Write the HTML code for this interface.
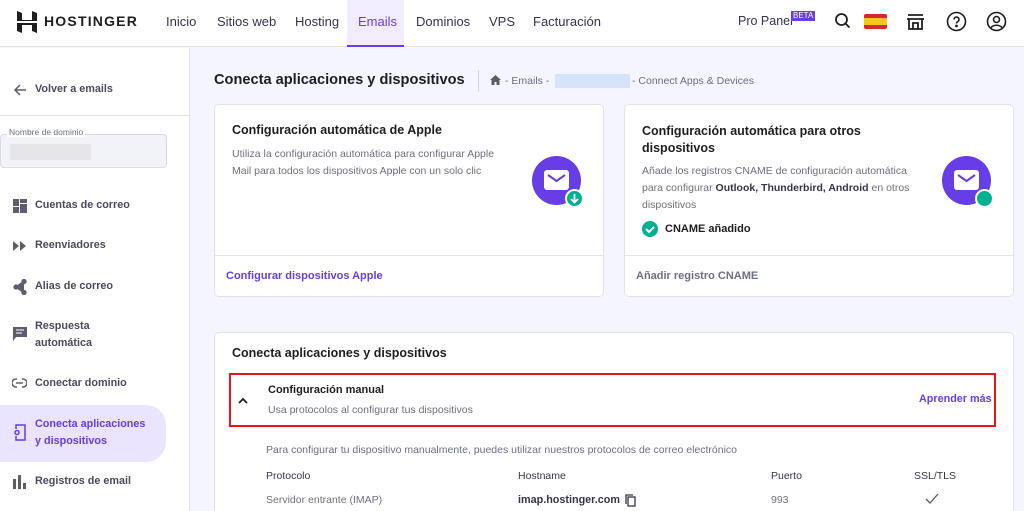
<!DOCTYPE html><html><head><meta charset="utf-8"><style>
*{box-sizing:border-box;margin:0;padding:0}
html,body{overflow:hidden}
body{width:1024px;height:511px;font-family:"Liberation Sans",sans-serif;background:#f4f5ff;position:relative;color:#1d1e20}
.a{position:absolute}
.hdr{left:0;top:0;width:1024px;height:47px;background:#fff;border-bottom:1px solid #e3e4e8}
.nav{top:14px;font-size:13px;color:#36344d}
.side{left:0;top:48px;width:190px;height:463px;background:#fff;border-right:1px solid #e3e4e8}
.si{font-size:10.8px;font-weight:bold;color:#4b4a5c;line-height:17px}
.card{background:#fff;border:1px solid #e3e4e8;border-radius:5px}
.g{color:#6d7081;font-size:10.5px;line-height:17px}
.ic{fill:#5e5d6e}
</style></head><body>
<div class="a hdr"></div>
<svg class="a" style="left:17px;top:11px" width="20" height="22" viewBox="0 0 20 22"><path d="M0 0l5 2v7l10 0V0l5 2v8H0z M0 12h20v10l-5-2v-6H5v8l-5-2z" fill="#1d1e20"/></svg>
<div class="a" style="left:44px;top:13px;font-size:14px;font-weight:bold;letter-spacing:1.2px">HOSTINGER</div>
<div class="a nav" style="left:166px">Inicio</div>
<div class="a nav" style="left:217px">Sitios web</div>
<div class="a nav" style="left:295px">Hosting</div>
<div class="a" style="left:347px;top:0;width:57px;height:47px;background:#f1ecff;border-bottom:2px solid #673de6"></div>
<div class="a nav" style="left:358px;color:#673de6">Emails</div>
<div class="a nav" style="left:416px">Dominios</div>
<div class="a nav" style="left:489px">VPS</div>
<div class="a nav" style="left:533px">Facturación</div>
<div class="a nav" style="left:738px;font-size:12.5px">Pro Panel</div>
<div class="a" style="left:791px;top:11px;background:#673de6;color:#fff;font-size:8px;padding:0 2px;line-height:10px">BETA</div>
<svg class="a" style="left:834px;top:12px" width="18" height="18" viewBox="0 0 18 18"><circle cx="7.5" cy="7.5" r="5.5" fill="none" stroke="#1d1e20" stroke-width="1.8"/><path d="M11.5 11.5l4 4" stroke="#1d1e20" stroke-width="1.8"/></svg>
<div class="a" style="left:864px;top:14px;width:23px;height:15px;background:#d8262c;border-radius:2px"><div style="margin-top:4px;height:7px;background:#f7c51e"></div></div>
<svg class="a" style="left:905px;top:11px" width="21" height="21" viewBox="0 0 21 21" fill="none" stroke="#1d1e20" stroke-width="1.8"><path d="M3 4h15M2 8h17M4 8v10h13V8M8 18v-6h5v6"/></svg>
<svg class="a" style="left:946px;top:11px" width="21" height="21" viewBox="0 0 21 21" fill="none" stroke="#1d1e20" stroke-width="1.6"><circle cx="10.5" cy="10.5" r="9"/><path d="M8 8.5a2.5 2.5 0 1 1 3.5 2.3c-.8.4-1 .9-1 1.7"/><circle cx="10.5" cy="15" r=".6" fill="#1d1e20"/></svg>
<svg class="a" style="left:986px;top:11px" width="21" height="21" viewBox="0 0 21 21" fill="none" stroke="#1d1e20" stroke-width="1.6"><circle cx="10.5" cy="10.5" r="9"/><circle cx="10.5" cy="8.5" r="3"/><path d="M5 16.5c3-3 8-3 11 0"/></svg>

<div class="a side"></div>
<div class="a" style="left:0;top:115px;width:190px;border-top:1px solid #e3e4e8"></div>
<svg class="a" style="left:13px;top:83px" width="14" height="14" viewBox="0 0 14 14" fill="none" stroke="#5e5d6e" stroke-width="1.5"><path d="M13 7H2M7 2L2 7l5 5"/></svg>
<div class="a si" style="left:35px;top:81px">Volver a emails</div>
<div class="a" style="left:0;top:134px;width:167px;height:34px;background:#f2f3f6;border:1px solid #dadce0;border-radius:4px"></div>
<div class="a" style="left:7px;top:127px;background:#fff;padding:0 2px;font-size:8.5px;color:#6d7081">Nombre de dominio</div>
<div class="a" style="left:10px;top:144px;width:81px;height:16px;background:#e6e6e8"></div>
<svg class="a" style="left:13px;top:199px" width="14" height="14"><rect x="0" y="0" width="6" height="7" class="ic"/><rect x="7" y="0" width="7" height="4" class="ic"/><rect x="0" y="8" width="6" height="6" class="ic"/><rect x="7" y="5" width="7" height="9" class="ic"/></svg>
<div class="a si" style="left:35px;top:197px">Cuentas de correo</div>
<svg class="a" style="left:13px;top:241px" width="14" height="10"><path d="M0 0l6 5-6 5zM7 0l6 5-6 5z" class="ic"/></svg>
<div class="a si" style="left:35px;top:237px">Reenviadores</div>
<svg class="a" style="left:13px;top:279px" width="14" height="16" fill="#5e5d6e" stroke="#5e5d6e" stroke-width="1.3"><path d="M11 2L3 8l8 6"/><circle cx="11" cy="2.5" r="2"/><circle cx="3" cy="8" r="2"/><circle cx="11" cy="13.5" r="2"/></svg>
<div class="a si" style="left:35px;top:278px">Alias de correo</div>
<svg class="a" style="left:13px;top:327px" width="14" height="15"><path d="M0 0h14v10H3l-3 4z" class="ic"/><path d="M3 3h8M3 6h6" stroke="#fff" stroke-width="1"/></svg>
<div class="a si" style="left:35px;top:318px">Respuesta<br>automática</div>
<svg class="a" style="left:12px;top:378px" width="15" height="10" fill="none" stroke="#5e5d6e" stroke-width="1.5"><path d="M5 1H4a4 4 0 0 0 0 8h1M10 1h1a4 4 0 0 1 0 8h-1M4 5h7"/></svg>
<div class="a si" style="left:35px;top:375px">Conectar dominio</div>
<div class="a" style="left:0;top:405px;width:166px;height:57px;background:#ebe4ff;border-radius:0 20px 20px 0"></div>
<svg class="a" style="left:14px;top:424px" width="12" height="17" fill="none" stroke="#673de6" stroke-width="1.5"><path d="M2 5V1h9v15H2v-4"/><circle cx="3" cy="8.5" r="2"/></svg>
<div class="a si" style="left:35px;top:416px;color:#673de6">Conecta aplicaciones<br>y dispositivos</div>
<svg class="a" style="left:13px;top:475px" width="14" height="14"><rect x="0" y="4" width="3" height="10" class="ic"/><rect x="5" y="0" width="3" height="14" class="ic"/><rect x="10" y="8" width="3" height="6" class="ic"/></svg>
<div class="a si" style="left:35px;top:473px">Registros de email</div>

<div class="a" style="left:214px;top:72px;font-size:14.6px;font-weight:bold">Conecta aplicaciones y dispositivos</div>
<div class="a" style="left:478px;top:70px;height:22px;border-left:1px solid #d5d6dc"></div>
<svg class="a" style="left:490px;top:75px" width="11" height="10"><path d="M5.5 0L0 5h1.5v5h3V7h2v3h3V5H11z" fill="#5e5d6e"/></svg>
<div class="a g" style="left:505px;top:73px;font-size:10.5px">- Emails -</div>
<div class="a" style="left:555px;top:74px;width:75px;height:14px;background:#d6e4fb"></div>
<div class="a g" style="left:632px;top:73px">- Connect Apps &amp; Devices</div>

<div class="a card" style="left:214px;top:104px;width:390px;height:193px"></div>
<div class="a" style="left:232px;top:123px;font-size:12.5px;font-weight:bold">Configuración automática de Apple</div>
<div class="a g" style="left:232px;top:146px">Utiliza la configuración automática para configurar Apple<br>Mail para todos los dispositivos Apple con un solo clic</div>
<div class="a" style="left:532px;top:156px;width:49px;height:49px;border-radius:50%;background:#673de6"></div>
<svg class="a" style="left:544px;top:170px" width="25" height="20"><rect width="25" height="20" rx="3" fill="#fff"/><path d="M4 5l8.5 6 8.5-6" stroke="#673de6" stroke-width="2" fill="none"/></svg>
<div class="a" style="left:565px;top:189px;width:19px;height:19px;border-radius:50%;background:#00b090;border:2px solid #fff"></div>
<svg class="a" style="left:569px;top:193px" width="11" height="11" fill="none" stroke="#fff" stroke-width="1.8"><path d="M5.5 1v8M2 6l3.5 3.5L9 6"/></svg>
<div class="a" style="left:215px;top:255px;width:388px;border-top:1px solid #e3e4e8"></div>
<div class="a" style="left:226px;top:270px;font-size:11px;font-weight:bold;color:#673de6">Configurar dispositivos Apple</div>

<div class="a card" style="left:624px;top:104px;width:390px;height:193px"></div>
<div class="a" style="left:642px;top:123px;font-size:12.5px;font-weight:bold;line-height:17px">Configuración automática para otros<br>dispositivos</div>
<div class="a g" style="left:642px;top:163px">Añade los registros CNAME de configuración automática<br>para configurar <b style="color:#36344d">Outlook, Thunderbird, Android</b> en otros<br>dispositivos</div>
<svg class="a" style="left:642px;top:221px" width="16" height="16"><circle cx="8" cy="8" r="8" fill="#00b090"/><path d="M4 8l3 3 5-5" stroke="#fff" stroke-width="2" fill="none"/></svg>
<div class="a" style="left:665px;top:223px;font-size:11px;font-weight:bold">CNAME añadido</div>
<div class="a" style="left:942px;top:156px;width:49px;height:49px;border-radius:50%;background:#673de6"></div>
<svg class="a" style="left:954px;top:170px" width="25" height="20"><rect width="25" height="20" rx="3" fill="#fff"/><path d="M4 5l8.5 6 8.5-6" stroke="#673de6" stroke-width="2" fill="none"/></svg>
<div class="a" style="left:975px;top:189px;width:19px;height:19px;border-radius:50%;background:#00b090;border:2px solid #fff"></div>
<div class="a" style="left:625px;top:255px;width:388px;border-top:1px solid #e3e4e8"></div>
<div class="a" style="left:636px;top:270px;font-size:11px;font-weight:bold;color:#6d7081">Añadir registro CNAME</div>

<div class="a card" style="left:214px;top:332px;width:800px;height:179px;border-bottom:none;border-radius:5px 5px 0 0"></div>
<div class="a" style="left:232px;top:346px;font-size:12.5px;font-weight:bold">Conecta aplicaciones y dispositivos</div>
<div class="a" style="left:229px;top:373px;width:767px;height:54px;border:2px solid #e8141b"></div>
<svg class="a" style="left:238px;top:397px" width="10" height="7" fill="none" stroke="#1d1e20" stroke-width="1.8"><path d="M1 6l4-4 4 4"/></svg>
<div class="a" style="left:268px;top:384px;font-size:11px;font-weight:bold">Configuración manual</div>
<div class="a g" style="left:268px;top:402px">Usa protocolos al configurar tus dispositivos</div>
<div class="a" style="left:919px;top:393px;font-size:10.8px;font-weight:bold;color:#673de6">Aprender más</div>
<div class="a g" style="left:266px;top:442px">Para configurar tu dispositivo manualmente, puedes utilizar nuestros protocolos de correo electrónico</div>
<div class="a" style="left:266px;top:470px;font-size:10.5px;color:#36344d">Protocolo</div>
<div class="a" style="left:518px;top:470px;font-size:10.5px;color:#36344d">Hostname</div>
<div class="a" style="left:771px;top:470px;font-size:10.5px;color:#36344d">Puerto</div>
<div class="a" style="left:914px;top:470px;font-size:10.5px;color:#36344d">SSL/TLS</div>
<div class="a g" style="left:266px;top:492px">Servidor entrante (IMAP)</div>
<div class="a" style="left:518px;top:494px;font-size:10.8px;font-weight:bold;color:#36344d">imap.hostinger.com</div>
<svg class="a" style="left:625px;top:494px" width="11" height="13" fill="none" stroke="#36344d" stroke-width="1.3"><rect x="3" y="3" width="7" height="9"/><path d="M1 10V1h7"/></svg>
<div class="a g" style="left:771px;top:492px">993</div>
<svg class="a" style="left:925px;top:493px" width="14" height="11" fill="none" stroke="#5e5d6e" stroke-width="1.3"><path d="M1 6l4 4 8-9"/></svg>
</body></html>
